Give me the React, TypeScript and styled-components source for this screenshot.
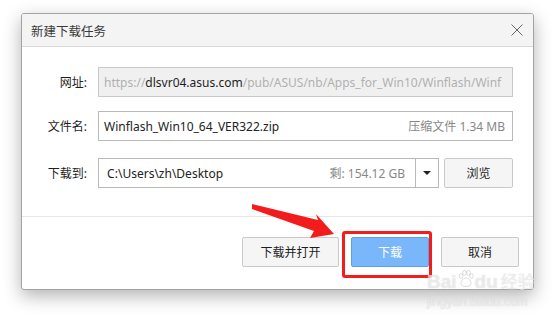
import React from "react";
import styled, { createGlobalStyle } from "styled-components";

const GlobalStyle = createGlobalStyle`
  html, body {
    margin: 0;
    padding: 0;
    background: #fff;
  }
  body {
    font-family: "Noto Sans", "Noto Sans CJK SC", sans-serif;
    font-size: 12px;
    color: #222;
  }
`;

const Page = styled.div`
  position: relative;
  width: 555px;
  height: 318px;
  padding: 13px 0 0 21px;
  box-sizing: border-box;
  overflow: hidden;
`;

const Dialog = styled.div`
  width: 513px;
  height: 277px;
  box-sizing: border-box;
  border: 1px solid #a3a3a3;
  border-radius: 3px;
  background: #fff;
  box-shadow: 0 6px 18px rgba(0, 0, 0, 0.3);
  display: flex;
  flex-direction: column;
  overflow: hidden;
`;

const TitleBar = styled.div`
  height: 33px;
  flex: none;
  box-sizing: border-box;
  background: #f4f4f4;
  border-bottom: 1px solid #d9d9d9;
  display: flex;
  align-items: center;
  justify-content: space-between;
  padding: 0 6px 0 9px;
`;

const Title = styled.div`
  font-size: 12.5px;
  color: #3a3a3a;
`;

const Close = styled.button`
  width: 20px;
  height: 20px;
  border: none;
  background: none;
  padding: 0;
  display: flex;
  align-items: center;
  justify-content: center;
`;

const Body = styled.div`
  height: 170px;
  flex: none;
  box-sizing: border-box;
  border-bottom: 1px solid #e6e6e6;
  padding: 20px 20px 0 19px;
  display: flex;
  flex-direction: column;
  gap: 14px;
`;

const Row = styled.div<{ $shift?: number }>`
  display: flex;
  align-items: center;
  height: 30px;
  margin-top: ${(p) => p.$shift || 0}px;
`;

const Label = styled.div`
  width: 46px;
  text-align: right;
  margin-right: 11px;
  color: #1e1e1e;
  flex: none;
`;

const Field = styled.div<{ $disabled?: boolean; $width?: number }>`
  height: 30px;
  box-sizing: border-box;
  border: 1px solid ${(p) => (p.$disabled ? "#c8c8c8" : "#b9b9b9")};
  background: ${(p) => (p.$disabled ? "#f0f0f0" : "#fff")};
  display: flex;
  align-items: center;
  padding: 0 5px;
  ${(p) => (p.$width ? `width: ${p.$width}px; flex: none;` : "flex: 1;")}
  white-space: nowrap;
  overflow: hidden;
`;

const Url = styled.span`
  color: #b0b0b0;
`;

const Host = styled.span`
  color: #1e1e1e;
`;

const Value = styled.span`
  flex: 1;
  color: #222;
`;

const Hint = styled.span`
  color: #888;
  margin-right: 2px;
`;

const DropArrow = styled.div`
  width: 22px;
  height: 28px;
  margin-right: -5px;
  margin-left: 8px;
  border-left: 1px solid #b9b9b9;
  display: flex;
  align-items: center;
  justify-content: center;
  &::after {
    content: "";
    border-left: 4px solid transparent;
    border-right: 4px solid transparent;
    border-top: 4px solid #222;
  }
`;

const Footer = styled.div`
  flex: 1;
  display: flex;
  justify-content: flex-end;
  align-items: flex-start;
  padding: 20px 14px 0 0;
  gap: 12px;
`;

const Button = styled.button<{ $primary?: boolean; $width: number }>`
  position: relative;
  width: ${(p) => p.$width}px;
  height: 30px;
  border-radius: 2px;
  border: 1px solid ${(p) => (p.$primary ? "#5f9fe4" : "#c9c9c9")};
  background: ${(p) => (p.$primary ? "#7ab7fa" : "#f5f5f5")};
  color: ${(p) => (p.$primary ? "#fff" : "#1e1e1e")};
  font-family: "Noto Sans", "Noto Sans CJK SC", sans-serif;
  font-size: 12px;
  padding: 0;
`;

const Highlight = styled.div`
  position: absolute;
  left: -10px;
  top: -7px;
  right: -4px;
  bottom: -12px;
  border: 3px solid #f41d1d;
  border-radius: 3px;
  pointer-events: none;
`;

const Arrow = styled.svg`
  position: absolute;
  left: 0;
  top: 0;
  pointer-events: none;
`;

const Watermark = styled.div`
  position: absolute;
  left: 427px;
  top: 270px;
  color: rgba(255, 255, 255, 0.55);
  text-shadow: 0 0 1px rgba(170, 170, 170, 0.55);
  font-family: "Liberation Sans", "Noto Sans CJK SC", sans-serif;
  pointer-events: none;
  line-height: 1;
`;

const MarkBig = styled.div`
  display: flex;
  align-items: flex-end;
  font-size: 19px;
  font-weight: bold;
  gap: 1px;
`;

const MarkSmall = styled.div`
  margin-top: 5px;
  font-size: 12.5px;
`;

function Paw() {
  return (
    <svg width="16" height="20" viewBox="0 0 16 20" style={{ marginBottom: 1 }}>
      <g fill="rgba(255,255,255,0.55)" stroke="rgba(170,170,170,0.5)" strokeWidth="0.8">
        <ellipse cx="3" cy="6" rx="1.8" ry="2.4" />
        <ellipse cx="6.5" cy="2.8" rx="1.8" ry="2.4" />
        <ellipse cx="10.5" cy="2.8" rx="1.8" ry="2.4" />
        <ellipse cx="13.5" cy="6" rx="1.8" ry="2.4" />
        <path d="M8 8 C4 8 2 13 3.5 15 C5 17 11 17 12.5 15 C14 13 12 8 8 8 Z" />
      </g>
    </svg>
  );
}

export default function App() {
  return (
    <Page>
      <GlobalStyle />
      <Dialog>
        <TitleBar>
          <Title>新建下载任务</Title>
          <Close>
            <svg width="12" height="12" viewBox="0 0 12 12">
              <path d="M0.5 0.5 L11.5 11.5 M11.5 0.5 L0.5 11.5" stroke="#666" strokeWidth="1" />
            </svg>
          </Close>
        </TitleBar>
        <Body>
          <Row>
            <Label>网址:</Label>
            <Field $disabled>
              <Url>https://</Url>
              <Host>dlsvr04.asus.com</Host>
              <Url>/pub/ASUS/nb/Apps_for_Win10/Winflash/Winf</Url>
            </Field>
          </Row>
          <Row>
            <Label>文件名:</Label>
            <Field>
              <Value>Winflash_Win10_64_VER322.zip</Value>
              <Hint>压缩文件 1.34 MB</Hint>
            </Field>
          </Row>
          <Row $shift={3}>
            <Label>下载到:</Label>
            <Field $width={341}>
              <Value>&nbsp;C:\Users\zh\Desktop</Value>
              <Hint>剩: 154.12 GB</Hint>
              <DropArrow />
            </Field>
            <Button $width={70} style={{ marginLeft: 5 }}>浏览</Button>
          </Row>
        </Body>
        <Footer>
          <Button $width={97}>下载并打开</Button>
          <Button $primary $width={78}>
            下载
            <Highlight />
          </Button>
          <Button $width={78}>取消</Button>
        </Footer>
      </Dialog>
      <Arrow width="555" height="318" viewBox="0 0 555 318">
        <polygon points="252,204 318,220 316,214 334,234 310,238 314,231 252,209" fill="#f21c1c" />
      </Arrow>
      <Watermark>
        <MarkBig>
          <span>Bai</span>
          <Paw />
          <span>du</span>
          <span style={{ fontWeight: "normal", fontSize: 17, marginLeft: 2 }}>经验</span>
        </MarkBig>
        <MarkSmall>jingyan.baidu.com</MarkSmall>
      </Watermark>
    </Page>
  );
}
